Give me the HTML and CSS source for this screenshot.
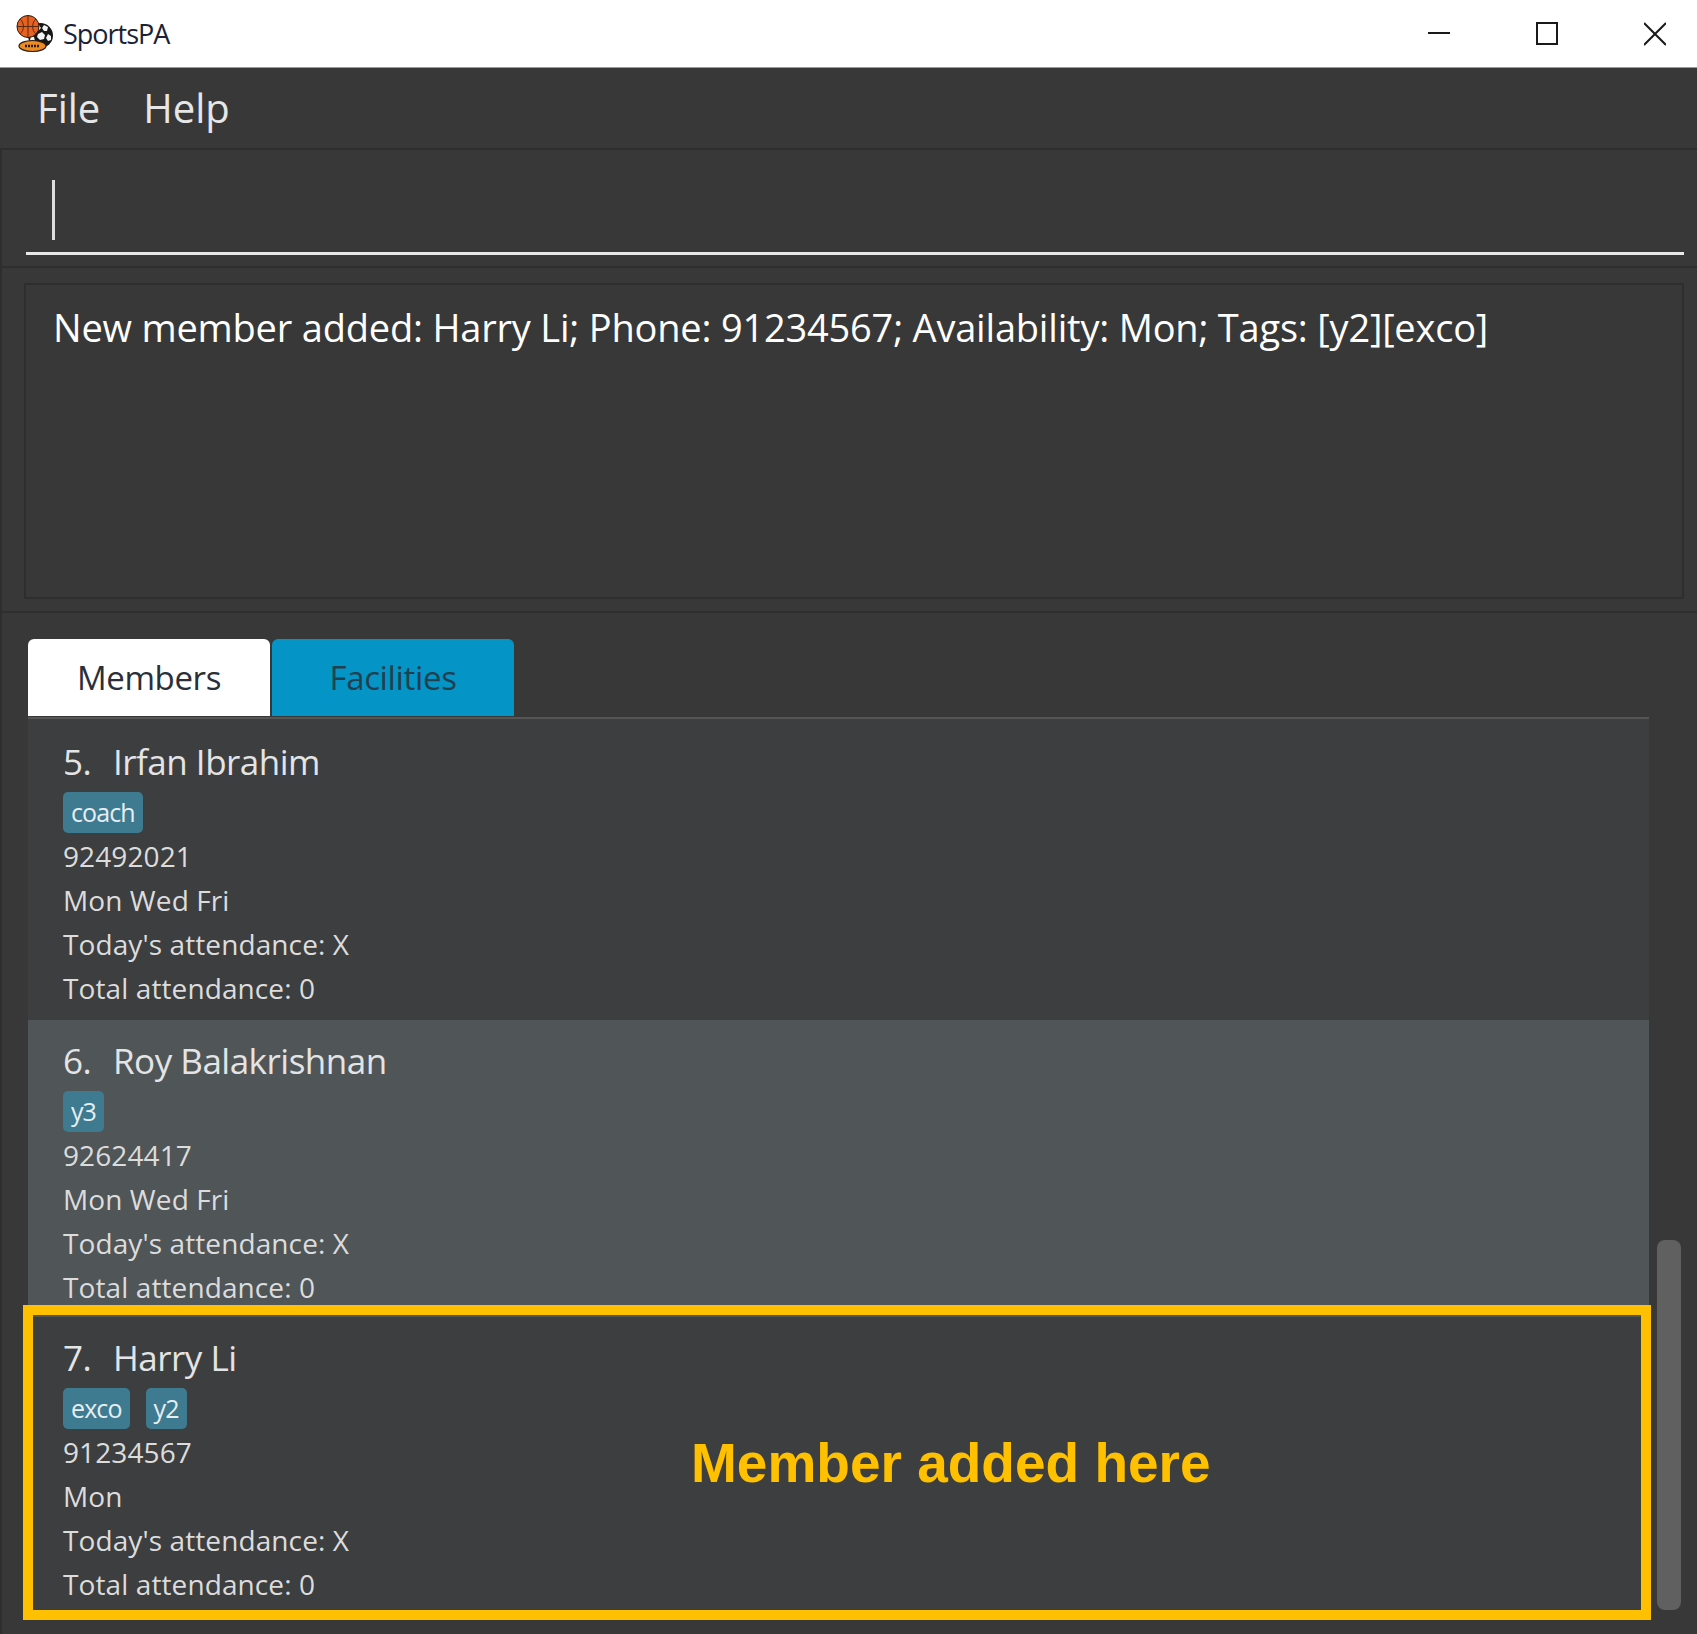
FILE: index.html
```html
<!DOCTYPE html>
<html lang="en">
<head>
    <meta charset="UTF-8">
    <meta name="viewport" content="width=device-width, initial-scale=1.0">
    <title>SportsPA</title>
    <link rel="stylesheet" href="styles.css">
</head>
<body>
    <div class="app">
        <header class="titlebar">
            <svg class="app-icon" width="40" height="40" viewBox="0 0 40 40">
                <circle cx="25.500" cy="21.500" r="12.500" fill="#171717"/>
                <path d="M20 12l4-1 2 3-3 3-3-2zM29 11l4 2-1 4-3 0-2-3zM23 20l4-2 3 3-1 4-4 1-3-3zM33 20l3 2 0 4-3 1-2-3zM16 22l3 1 1 4-3 2-2-3z" fill="#f4f4f4"/>
                <circle cx="13" cy="12.500" r="11" fill="#e8611f" stroke="#2a1a10" stroke-width="1"/>
                <path d="M2 12.500h22M13 1.500v22M5 5c4 3 5 11 0 15M21 5c-4 3-5 11 0 15" fill="none" stroke="#5a2a10" stroke-width="1"/>
                <ellipse cx="17.500" cy="32" rx="13.500" ry="5.500" fill="#ee8a22" stroke="#2a1a10" stroke-width="1.200"/>
                <path d="M10 32h15" stroke="#2a1a10" stroke-width="2.500" stroke-dasharray="2 1"/>
            </svg>
            <span class="app-name">SportsPA</span>
            <div class="window-controls">
                <svg width="22" height="24" viewBox="0 0 22 24"><path d="M0 11h22" stroke="#1a1a1a" stroke-width="2"/></svg>
                <svg width="22" height="24" viewBox="0 0 22 24"><rect x="1" y="1" width="20" height="21" fill="none" stroke="#1a1a1a" stroke-width="2"/></svg>
                <svg width="22" height="24" viewBox="0 0 22 24"><path d="M0 1l22 22M22 1L0 23" stroke="#1a1a1a" stroke-width="2"/></svg>
            </div>
        </header>

        <nav class="menubar">
            <span>File</span>
            <span>Help</span>
        </nav>

        <section class="command-pane">
            <div class="command-input"><div class="caret"></div></div>
        </section>

        <section class="result-pane">
            <div class="result-box">New member added: Harry Li; Phone: 91234567; Availability: Mon; Tags: [y2][exco]</div>
        </section>

        <main class="list-pane">
            <div class="list-column">
                <div class="tabs">
                    <div class="tab tab-active">Members</div>
                    <div class="tab">Facilities</div>
                </div>
                <div class="member-list">
                    <div class="member-row">
                        <div class="member-name"><span class="member-index">5.</span>Irfan Ibrahim</div>
                        <div class="tags"><span class="tag">coach</span></div>
                        <div class="member-line">92492021</div>
                        <div class="member-line">Mon Wed Fri</div>
                        <div class="member-line">Today's attendance: X</div>
                        <div class="member-line">Total attendance: 0</div>
                    </div>
                    <div class="member-row member-row-even">
                        <div class="member-name"><span class="member-index">6.</span>Roy Balakrishnan</div>
                        <div class="tags"><span class="tag">y3</span></div>
                        <div class="member-line">92624417</div>
                        <div class="member-line">Mon Wed Fri</div>
                        <div class="member-line">Today's attendance: X</div>
                        <div class="member-line">Total attendance: 0</div>
                    </div>
                    <div class="member-row">
                        <div class="member-name"><span class="member-index">7.</span>Harry Li</div>
                        <div class="tags"><span class="tag">exco</span><span class="tag">y2</span></div>
                        <div class="member-line">91234567</div>
                        <div class="member-line">Mon</div>
                        <div class="member-line">Today's attendance: X</div>
                        <div class="member-line">Total attendance: 0</div>
                    </div>
                </div>
            </div>
            <div class="scrollbar"><div class="scroll-thumb"></div></div>
        </main>

        <div class="callout"><span class="callout-text">Member added here</span></div>
    </div>
</body>
</html>
```

FILE: styles.css
```css
* {
  box-sizing: border-box;
}

body {
  margin: 0;
  background-color: #383838;
  font-family: "Open Sans", "Noto Sans", sans-serif;
}

.app {
  position: relative;
  width: 1697px;
  height: 1634px;
  overflow: hidden;
  display: flex;
  flex-direction: column;
}

.titlebar {
  height: 68px;
  background-color: #fff;
  border-bottom: 1px solid #9a9a9a;
  display: flex;
  align-items: center;
  padding-left: 15px;
}

.app-name {
  margin-left: 8px;
  font-size: 27px;
  letter-spacing: -1px;
  color: #1c2233;
}

.window-controls {
  margin-left: auto;
  margin-right: 31px;
  display: flex;
  gap: 86px;
}

.menubar {
  height: 82px;
  display: flex;
  align-items: center;
  gap: 43px;
  padding: 0 0 2px 37px;
  font-size: 40px;
  color: #e6e6e6;
  border-bottom: 2px solid #2e2e2e;
}

.command-pane {
  height: 118px;
  padding: 0 13px 0 24px;
  border-left: 2px solid #2e2e2e;
  border-bottom: 2px solid #2e2e2e;
}

.command-input {
  height: 105px;
  padding: 30px 0 0 26px;
  border-bottom: 3px solid #e8e8e8;
}

.caret {
  width: 3px;
  height: 60px;
  background-color: #ddd;
}

.result-pane {
  height: 345px;
  padding: 15px 13px 12px 22px;
  border-left: 2px solid #2e2e2e;
  border-bottom: 2px solid #2e2e2e;
}

.result-box {
  height: 316px;
  border: 2px solid #2e2e2e;
  padding: 17px 0 0 27px;
  font-size: 38px;
  letter-spacing: -0.200px;
  line-height: 50px;
  color: #fff;
}

.list-pane {
  flex: 1;
  min-height: 0;
  display: flex;
  border-left: 2px solid #2e2e2e;
}

.list-column {
  width: 1647px;
  padding: 26px 0 0 26px;
  display: flex;
  flex-direction: column;
}

.tabs {
  display: flex;
  gap: 2px;
  height: 80px;
  border-bottom: 2px solid #555;
}

.tab {
  width: 242px;
  height: 77px;
  border-radius: 6px 6px 0 0;
  background-color: #0494c6;
  color: #21404f;
  font-size: 33px;
  letter-spacing: -0.350px;
  line-height: 77px;
  text-align: center;
}

.tab-active {
  background-color: #fff;
  color: #2a2f3a;
}

.member-list {
  height: 896px;
}

.member-row {
  height: 297px;
  padding: 17px 0 0 35px;
  background-color: #3c3e40;
  color: #dcdcdc;
}

.member-row:first-child {
  height: 301px;
  padding-top: 19px;
}

.member-row-even {
  background-color: #505558;
}

.member-name {
  height: 48px;
  line-height: 48px;
  font-size: 35px;
  letter-spacing: -0.500px;
  color: #e4e4e4;
}

.member-index {
  display: inline-block;
  width: 50px;
}

.tags {
  display: flex;
  gap: 16px;
  margin: 6px 0 1px;
}

.tag {
  height: 41px;
  line-height: 40px;
  padding: 0 8px;
  border-radius: 5px;
  background-color: #3e7b91;
  color: #e6eef2;
  font-size: 25px;
  letter-spacing: -0.900px;
}

.member-line {
  height: 44px;
  line-height: 44px;
  font-size: 28px;
  letter-spacing: 0.100px;
}

.scrollbar {
  flex: 1;
  padding: 627px 0 0 8px;
}

.scroll-thumb {
  width: 24px;
  height: 370px;
  border-radius: 8px;
  background-color: #606060;
}

/* yellow annotation drawn on top of the screenshot */
.callout {
  position: absolute;
  left: 23px;
  top: 1305px;
  width: 1628px;
  height: 315px;
  border: 10px solid #ffc000;
  display: flex;
  align-items: center;
  padding-left: 658px;
}

.callout-text {
  font-family: "Liberation Sans", Arial, sans-serif;
  font-weight: bold;
  font-size: 55px;
  color: #ffc000;
}
```
